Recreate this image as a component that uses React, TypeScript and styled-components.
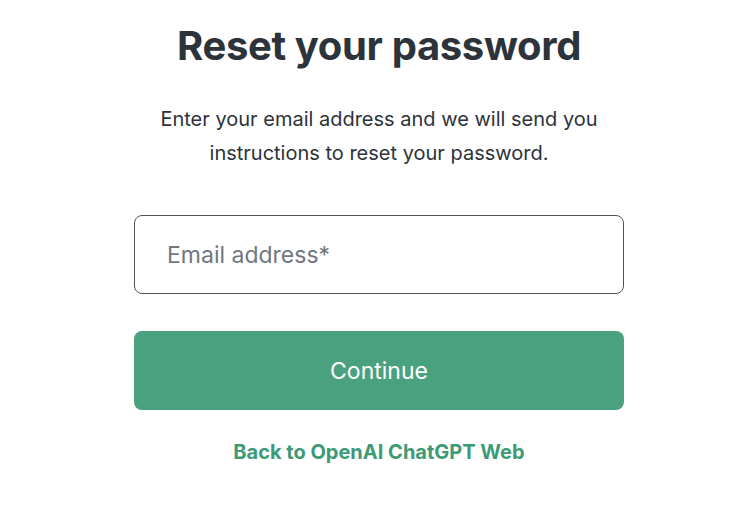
import React from 'react';
import styled, { createGlobalStyle } from 'styled-components';

const GlobalStyle = createGlobalStyle`
  html, body {
    margin: 0;
    padding: 0;
    background: #ffffff;
  }
  body {
    font-family: Inter, "Noto Sans", "Liberation Sans", sans-serif;
    -webkit-font-smoothing: antialiased;
  }
`;

const Page = styled.main`
  box-sizing: border-box;
  width: 750px;
  height: 518px;
  padding-left: 8px;
  display: flex;
  justify-content: center;
  overflow: hidden;
`;

const Card = styled.section`
  width: 490px;
  display: flex;
  flex-direction: column;
  align-items: stretch;
  padding-top: 20px;
`;

const Title = styled.h1`
  margin: 0;
  text-align: center;
  font-size: 40px;
  line-height: 52px;
  font-weight: 700;
  letter-spacing: -0.35px;
  color: #2d333a;
`;

const Subtitle = styled.p`
  margin: 30px 0 0;
  text-align: center;
  font-size: 20px;
  line-height: 34px;
  color: #2d333a;
  padding: 0 16px;
`;

const Field = styled.input`
  margin-top: 45px;
  box-sizing: border-box;
  height: 79px;
  width: 100%;
  border: 1.3px solid #50555c;
  border-radius: 8px;
  padding: 0 32px;
  font-family: inherit;
  font-size: 23px;
  color: #2d333a;
  outline: none;

  &::placeholder {
    color: #6f7780;
  }
`;

const Button = styled.button`
  margin-top: 37px;
  height: 79px;
  width: 100%;
  border: none;
  border-radius: 8px;
  background: #4aa180;
  color: #ffffff;
  font-family: inherit;
  font-size: 23px;
  cursor: pointer;
`;

const BackLink = styled.a`
  margin-top: 30px;
  align-self: center;
  font-size: 20px;
  font-weight: 700;
  color: #3d9a76;
  text-decoration: none;
`;

export default function App() {
  return (
    <>
      <GlobalStyle />
      <Page>
        <Card>
          <Title>Reset your password</Title>
          <Subtitle>
            Enter your email address and we will send you instructions to reset your password.
          </Subtitle>
          <Field type="email" placeholder="Email address*" />
          <Button type="button">Continue</Button>
          <BackLink href="#">Back to OpenAI ChatGPT Web</BackLink>
        </Card>
      </Page>
    </>
  );
}
